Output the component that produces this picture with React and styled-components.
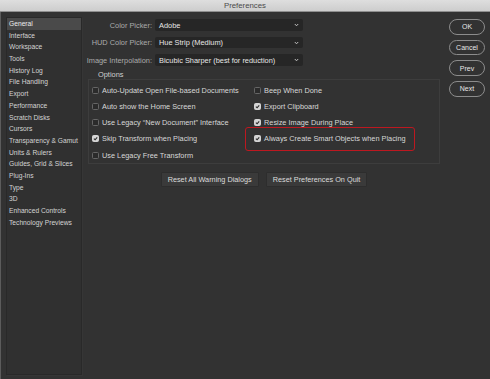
import React from 'react';
import styled, { createGlobalStyle } from 'styled-components';

const Global = createGlobalStyle`
  html, body { margin: 0; padding: 0; background: #323232; }
  body { font-family: "Liberation Sans", Arial, sans-serif; }
  #root { width: 490px; height: 379px; overflow: hidden; }
  * { box-sizing: border-box; }
`;

const Window = styled.div`
  width: 490px;
  height: 379px;
  display: flex;
  flex-direction: column;
  background: #323232;
`;

const TitleBar = styled.div`
  height: 12px;
  flex: none;
  display: flex;
  align-items: center;
  justify-content: center;
  background: linear-gradient(#dedede, #cdcdcd);
  border-bottom: 1px solid #8f8f8f;
  color: #4a4a4a;
  font-size: 7.8px;
  padding-bottom: 1px;
`;

const Body = styled.div`
  flex: 1;
  min-height: 0;
  display: flex;
  align-items: flex-start;
  padding: 5px 5px 4px 5px;
  border-left: 1px solid #5c5c5c;
`;

const Sidebar = styled.ul`
  list-style: none;
  margin: 0;
  padding: 0;
  flex: none;
  width: 76px;
  align-self: stretch;
  background: #303030;
  border: 1px solid #292929;
  box-shadow: 1px 1px 0 #363636;
`;

const NavItem = styled.li`
  height: 11.7px;
  line-height: 11.7px;
  padding-left: 2px;
  font-size: 6.7px;
  white-space: nowrap;
  color: ${p => (p.$active ? '#ececec' : '#d4d4d4')};
  background: ${p => (p.$active ? '#4a4a4a' : 'transparent')};
`;

const Main = styled.div`
  margin-left: 2px;
  width: 356px;
  flex: none;
  display: flex;
  flex-direction: column;
  padding-top: 2.3px;
`;

const FormGrid = styled.div`
  display: grid;
  grid-template-columns: 68px 148px;
  column-gap: 3px;
  row-gap: 6px;
  align-items: center;
`;

const FieldLabel = styled.span`
  text-align: right;
  font-size: 7.4px;
  color: #ababab;
  white-space: nowrap;
`;

const Select = styled.div`
  height: 11.5px;
  background: #262626;
  border-radius: 2px;
  display: flex;
  align-items: center;
  justify-content: space-between;
  padding: 0 4px 0 4px;
  font-size: 7.4px;
  color: #e6e6e6;
  white-space: nowrap;
`;

const GroupTitle = styled.div`
  margin-top: 5.3px;
  padding-left: 14px;
  font-size: 7.4px;
  line-height: 8px;
  color: #d0d0d0;
`;

const GroupBox = styled.div`
  margin-left: 4px;
  border: 1px solid #3d3d3d;
  padding: 2px 0 0 3px;
  display: grid;
  grid-template-columns: 162px 1fr;
  grid-template-rows: repeat(5, 16.25px);
  grid-auto-flow: column;
`;

const CheckRow = styled.div`
  position: relative;
  justify-self: start;
  display: flex;
  align-items: center;
  gap: 3px;
  font-size: 7.35px;
  color: #d8d8d8;
  white-space: nowrap;
  ${p => p.$highlight && `
    &::after {
      content: '';
      position: absolute;
      inset: -4px -9px -4px -9px;
      border: 1.5px solid #bd1820;
      border-radius: 3px;
      pointer-events: none;
    }
  `}
`;

const Box = styled.span`
  width: 7px;
  height: 7px;
  flex: none;
  border-radius: 1.5px;
  display: flex;
  align-items: center;
  justify-content: center;
  background: ${p => (p.$checked ? '#d4d4d4' : '#2b2b2b')};
  border: 1px solid ${p => (p.$checked ? '#d4d4d4' : '#666666')};
`;

const ButtonRow = styled.div`
  margin-top: 7.7px;
  padding-left: 4px;
  display: flex;
  justify-content: center;
  gap: 7px;
`;

const Button = styled.div`
  height: 15px;
  padding: 0 6px;
  display: flex;
  align-items: center;
  background: #3a3a3a;
  border: 1px solid #2d2d2d;
  border-radius: 1px;
  font-size: 7.3px;
  color: #dcdcdc;
  white-space: nowrap;
`;

const SideButtons = styled.div`
  margin-left: 9px;
  width: 36px;
  flex: none;
  display: flex;
  flex-direction: column;
  gap: 5px;
  padding-top: 2px;
`;

const Pill = styled.div`
  height: 15.7px;
  border: 1px solid #8c8c8c;
  border-radius: 8px;
  display: flex;
  align-items: center;
  justify-content: center;
  font-size: 7px;
  color: #e6e6e6;
`;

const Chevron = () => (
  <svg width="5" height="4" viewBox="0 0 5 4">
    <path d="M0.8 1 L2.5 2.8 L4.2 1" fill="none" stroke="#cfcfcf" strokeWidth="0.9" />
  </svg>
);

const Check = () => (
  <svg width="5" height="5" viewBox="0 0 10 10">
    <path d="M1.8 5.2 L4.2 7.6 L8.4 2.6" fill="none" stroke="#2a2a2a" strokeWidth="2.2" />
  </svg>
);

const CheckItem = ({ checked, highlight, children }) => (
  <CheckRow $highlight={highlight}>
    <Box $checked={checked}>{checked && <Check />}</Box>
    <span>{children}</span>
  </CheckRow>
);

const nav = [
  'General', 'Interface', 'Workspace', 'Tools', 'History Log', 'File Handling', 'Export',
  'Performance', 'Scratch Disks', 'Cursors', 'Transparency & Gamut', 'Units & Rulers',
  'Guides, Grid & Slices', 'Plug-Ins', 'Type', '3D', 'Enhanced Controls', 'Technology Previews',
];

const fields = [
  ['Color Picker:', 'Adobe'],
  ['HUD Color Picker:', 'Hue Strip (Medium)'],
  ['Image Interpolation:', 'Bicubic Sharper (best for reduction)'],
];

const options = [
  { label: 'Auto-Update Open File-based Documents' },
  { label: 'Auto show the Home Screen' },
  { label: 'Use Legacy \u201CNew Document\u201D Interface' },
  { label: 'Skip Transform when Placing', checked: true },
  { label: 'Use Legacy Free Transform' },
  { label: 'Beep When Done' },
  { label: 'Export Clipboard', checked: true },
  { label: 'Resize Image During Place', checked: true },
  { label: 'Always Create Smart Objects when Placing', checked: true, highlight: true },
];

export default function App() {
  return (
    <>
      <Global />
      <Window>
        <TitleBar>Preferences</TitleBar>
        <Body>
          <Sidebar>
            {nav.map((n, i) => (
              <NavItem key={n} $active={i === 0}>{n}</NavItem>
            ))}
          </Sidebar>
          <Main>
            <FormGrid>
              {fields.map(([l, v]) => (
                <React.Fragment key={l}>
                  <FieldLabel>{l}</FieldLabel>
                  <Select>
                    <span>{v}</span>
                    <Chevron />
                  </Select>
                </React.Fragment>
              ))}
            </FormGrid>
            <GroupTitle>Options</GroupTitle>
            <GroupBox>
              {options.map(o => (
                <CheckItem key={o.label} checked={o.checked} highlight={o.highlight}>{o.label}</CheckItem>
              ))}
            </GroupBox>
            <ButtonRow>
              <Button>Reset All Warning Dialogs</Button>
              <Button>Reset Preferences On Quit</Button>
            </ButtonRow>
          </Main>
          <SideButtons>
            <Pill>OK</Pill>
            <Pill>Cancel</Pill>
            <Pill>Prev</Pill>
            <Pill>Next</Pill>
          </SideButtons>
        </Body>
      </Window>
    </>
  );
}
